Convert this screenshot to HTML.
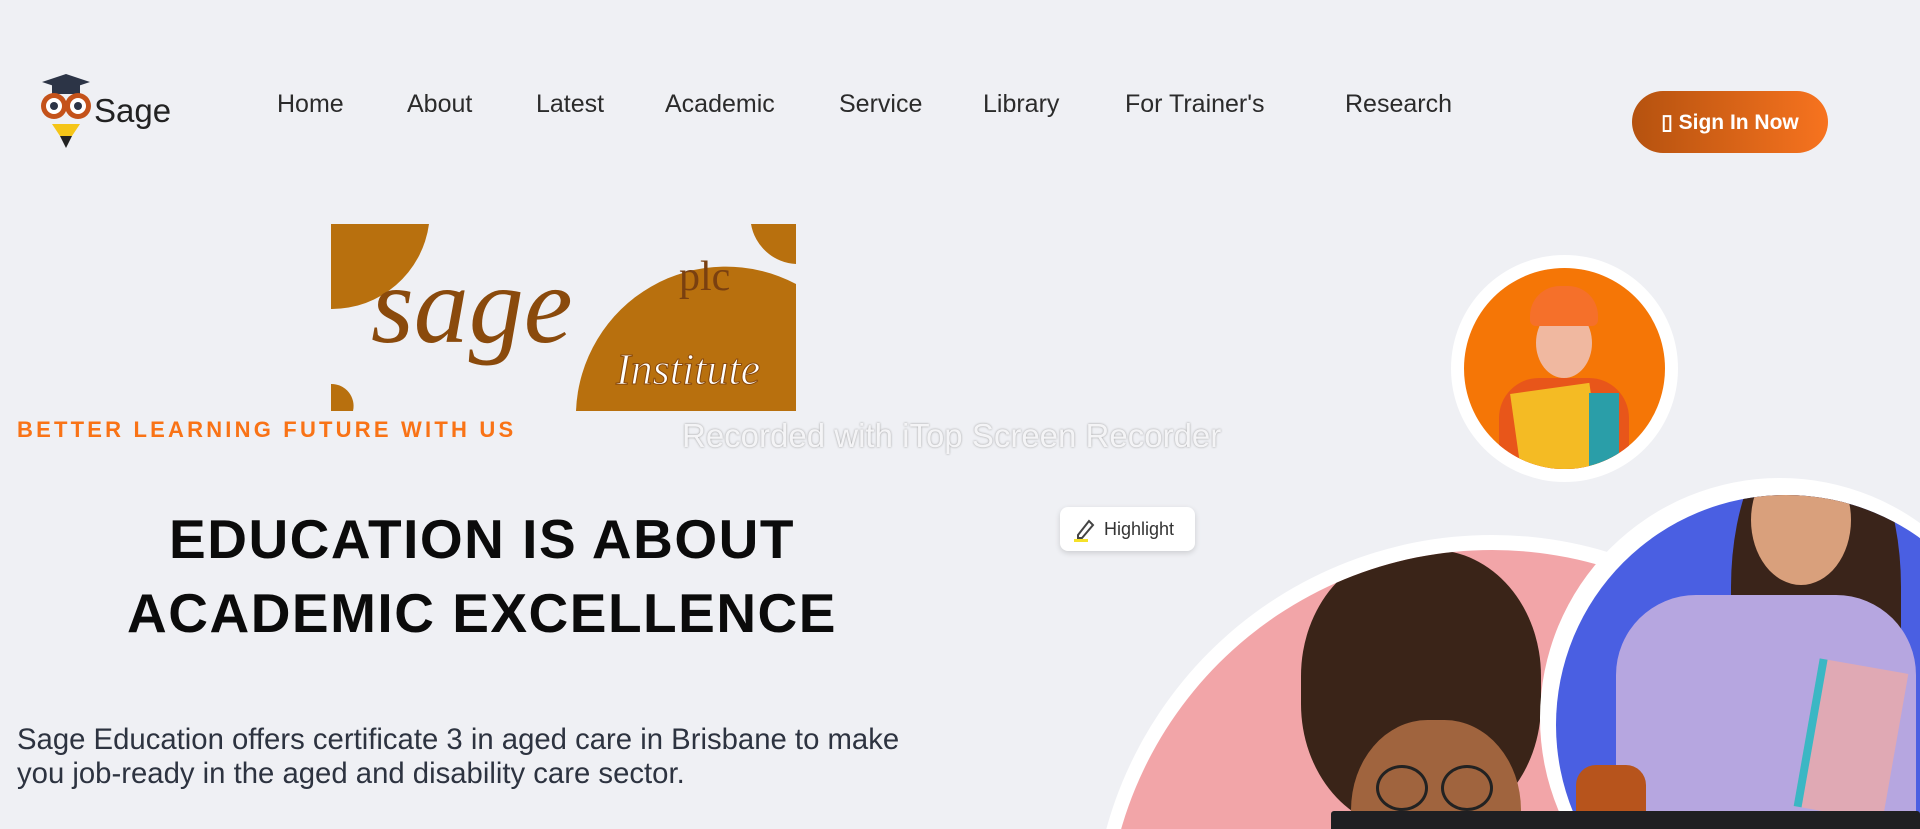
<!DOCTYPE html>
<html><head><meta charset="utf-8"><style>
*{margin:0;padding:0;box-sizing:border-box}
html,body{width:1920px;height:829px;overflow:hidden}
body{background:#eff0f4;font-family:"Liberation Sans",sans-serif;color:#222}
#w{position:relative;width:1920px;height:829px;overflow:hidden}
.a{position:absolute}
.nav{top:90px;font-size:25px;color:#2b2b2b;white-space:nowrap}
.btn{left:1632px;top:91px;width:196px;height:62px;border-radius:31px;background:linear-gradient(90deg,#b5520f,#f7731f);color:#fff;font-weight:bold;font-size:21px;display:flex;align-items:center;justify-content:center}
h1{position:absolute;left:0;width:964px;top:502px;text-align:center;font-size:55px;line-height:74px;font-weight:bold;color:#0b0b0b;letter-spacing:1.5px}
</style></head><body><div id="w">
<svg class="a" style="left:38px;top:72px" width="56" height="78" viewBox="0 0 56 78">
<polygon points="28,2 52,10 28,18 4,10" fill="#2c3446"/>
<rect x="14" y="12" width="28" height="10" fill="#2c3446"/>
<ellipse cx="16" cy="34" rx="13" ry="13" fill="#c4521a"/>
<ellipse cx="40" cy="34" rx="13" ry="13" fill="#c4521a"/>
<circle cx="16" cy="34" r="8" fill="#fff"/><circle cx="40" cy="34" r="8" fill="#fff"/>
<circle cx="16" cy="34" r="4" fill="#2c3446"/><circle cx="40" cy="34" r="4" fill="#2c3446"/>
<polygon points="14,52 42,52 34,64 22,64" fill="#f5c518"/>
<polygon points="22,64 34,64 28,76" fill="#222"/>
</svg>
<div class="a" style="left:94px;top:92px;font-size:33px;color:#222">Sage</div>
<div class="a nav" style="left:277px">Home</div>
<div class="a nav" style="left:407px">About</div>
<div class="a nav" style="left:536px">Latest</div>
<div class="a nav" style="left:665px">Academic</div>
<div class="a nav" style="left:839px">Service</div>
<div class="a nav" style="left:983px">Library</div>
<div class="a nav" style="left:1125px">For Trainer's</div>
<div class="a nav" style="left:1345px">Research</div>
<div class="a btn">▯ Sign In Now</div>

<svg class="a" style="left:331px;top:224px" width="465" height="187" viewBox="0 0 465 187">
<rect width="465" height="187" fill="#eff0f4"/>
<path d="M0,0 H98 A98,98 0 0 1 0,85 Z" fill="#b8700e"/>
<path d="M420,0 H465 V40 A48,48 0 0 1 420,0Z" fill="#b8700e"/>
<path d="M0,160 A22,22 0 0 1 22,187 H0Z" fill="#b8700e"/>
<path d="M245,187 A150,150 0 0 1 465,60 V187Z" fill="#b8700e"/>
<text x="40" y="118" font-family="Liberation Serif" font-style="italic" font-size="110" fill="#8a4a0c">sage</text>
<text x="348" y="66" font-family="Liberation Serif" font-size="42" fill="#7a4010">plc</text>
<text x="285" y="160" font-family="Liberation Serif" font-style="italic" font-size="44" fill="#fff" stroke="#8a4a0c" stroke-width="1">Institute</text>
</svg>
<div class="a" style="left:17px;top:417px;font-size:22px;font-weight:bold;color:#f97316;letter-spacing:3.2px;white-space:nowrap">BETTER LEARNING FUTURE WITH US</div>
<div class="a" style="left:682px;top:417px;font-size:33px;color:#f4f4f6;text-shadow:0 0 2px #999;white-space:nowrap">Recorded with iTop Screen Recorder</div>
<h1>EDUCATION IS ABOUT<br>ACADEMIC EXCELLENCE</h1>
<div class="a" style="left:17px;top:723px;font-size:29.3px;line-height:34px;color:#2d3340;white-space:nowrap">Sage Education offers certificate 3 in aged care in Brisbane to make<br>you job-ready in the aged and disability care sector.</div>
<div class="a" style="left:1060px;top:507px;width:135px;height:44px;background:#fff;border-radius:8px;box-shadow:0 2px 6px rgba(0,0,0,.15);font-size:18px;color:#333;display:flex;align-items:center;padding-left:12px">
<svg width="26" height="26" viewBox="0 0 26 26"><path d="M6,19 L17,5 L21,9 L10,22 L6,22Z" fill="none" stroke="#444" stroke-width="2"/><rect x="2" y="23" width="14" height="3" fill="#f5e12a"/></svg><span style="margin-left:6px">Highlight</span></div>

<div class="a" style="left:1451px;top:255px;width:227px;height:227px;border-radius:50%;background:#fff"></div>
<div class="a" style="left:1464px;top:268px;width:201px;height:201px;border-radius:50%;background:#f57606;overflow:hidden">
<div class="a" style="left:72px;top:40px;width:56px;height:70px;border-radius:50%;background:#f0b8a0"></div>
<div class="a" style="left:66px;top:18px;width:68px;height:40px;border-radius:30px 30px 6px 6px;background:#f5702a"></div>
<div class="a" style="left:35px;top:110px;width:130px;height:100px;border-radius:40px 40px 0 0;background:#e8561a"></div>
<div class="a" style="left:52px;top:120px;width:80px;height:90px;background:#f4bb24;transform:rotate(-8deg)"></div>
<div class="a" style="left:125px;top:125px;width:30px;height:75px;background:#2a9ea8"></div>
</div>

<div class="a" style="left:1092px;top:535px;width:800px;height:800px;border-radius:50%;background:#fff"></div>
<div class="a" style="left:1106px;top:550px;width:772px;height:772px;border-radius:50%;background:#f2a5a8;overflow:hidden">
<div class="a" style="left:195px;top:0px;width:240px;height:280px;border-radius:45%;background:#3a2418"></div>
<div class="a" style="left:245px;top:170px;width:170px;height:200px;border-radius:45%;background:#a0643e"></div>
<div class="a" style="left:270px;top:215px;width:52px;height:46px;border-radius:50%;border:3px solid #222"></div>
<div class="a" style="left:335px;top:215px;width:52px;height:46px;border-radius:50%;border:3px solid #222"></div>
</div>

<div class="a" style="left:1540px;top:478px;width:480px;height:480px;border-radius:50%;background:#fff"></div>
<div class="a" style="left:1556px;top:495px;width:460px;height:460px;border-radius:50%;background:#4a5fe2;overflow:hidden">
<div class="a" style="left:175px;top:-70px;width:170px;height:360px;border-radius:45%;background:#3a241a"></div>
<div class="a" style="left:195px;top:-40px;width:100px;height:130px;border-radius:50%;background:#d9a07c"></div>
<div class="a" style="left:60px;top:100px;width:300px;height:360px;border-radius:80px 80px 0 0;background:#b6a6e0"></div>
<div class="a" style="left:250px;top:170px;width:90px;height:150px;background:#e0a9b4;border-left:8px solid #3bb7c4;transform:rotate(10deg)"></div>
<div class="a" style="left:20px;top:270px;width:70px;height:100px;border-radius:20px;background:#b7541c"></div>
</div>

<div class="a" style="left:1331px;top:811px;width:589px;height:18px;background:#1f1f22;border-radius:3px 3px 0 0"></div>
</div></body></html>
